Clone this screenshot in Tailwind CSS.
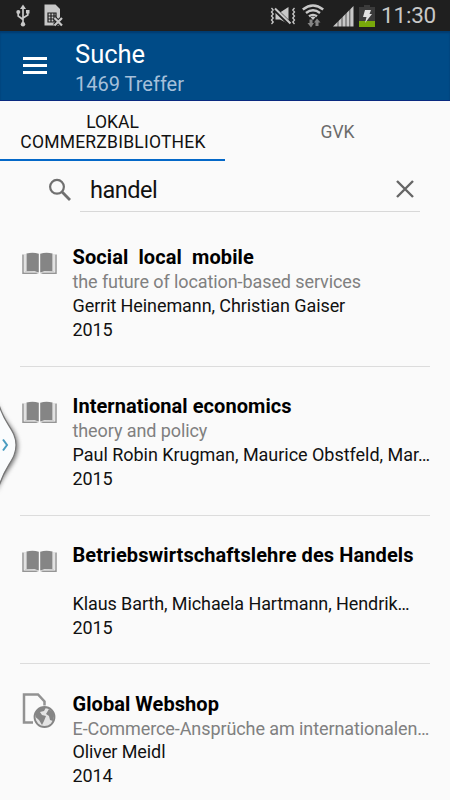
<!DOCTYPE html>
<html lang="de">
<head>
<meta charset="utf-8">
<title>Suche</title>
<script src="https://cdn.jsdelivr.net/npm/@tailwindcss/browser@4"></script>
</head>
<body class="relative w-[450px] h-[800px] overflow-hidden bg-[#fafafa] font-[Roboto,sans-serif] text-[#111]">
<svg class="hidden">
  <symbol id="book" viewBox="0 0 36 24">
    <path d="M4.500 1.500Q11 -.3 16.800 1.800V20.500Q11 18.500 4.500 19.400Z" fill="#858585"/>
    <path d="M18.200 1.800Q24 -.3 30.500 1.500V19.400Q24 18.500 18.200 20.500Z" fill="#858585"/>
    <path d="M1 2.500V21.300H15.500M34 2.500V21.300H19.500" fill="none" stroke="#959595" stroke-width="1.500"/>
    <path d="M3 2V19.800Q10 19 16.500 21.200M32 2V19.800Q25 19 18.500 21.200" fill="none" stroke="#cacaca" stroke-width="1"/>
  </symbol>
</svg>
<header>
  <div class="flex h-[31px] items-center bg-[#1f1f1f] text-[#c8c8c8]">
    <svg class="ml-4 w-[14px] h-[23px]" viewBox="0 0 14 23" fill="none" stroke="#c8c8c8" stroke-width="1.700">
      <path d="M7 4V19M2.200 8V12L7 15.500M11.800 8V11L7 14"/>
      <path d="M7 .5L10 5H4Z" fill="#c8c8c8" stroke="none"/>
      <circle cx="7" cy="20.200" r="2.200" fill="#c8c8c8" stroke="none"/>
      <circle cx="2.300" cy="8" r="2" fill="#c8c8c8" stroke="none"/>
      <path d="M10 6H13.500V9.500H10Z" fill="#c8c8c8" stroke="none"/>
    </svg>
    <svg class="ml-[14px] w-[20px] h-[23px]" viewBox="0 0 20 23">
      <path d="M.5 .5H11.500L16 5V21.500H.5Z" fill="#c8c8c8"/>
      <path d="M4 9H12V18H4ZM4 12H12M4 15H12M7 9V18M10 9V18" fill="none" stroke="#1f1f1f" stroke-width="1.200"/>
      <path d="M10.500 14L18 21.500M18 14L10.500 21.500" stroke="#1f1f1f" stroke-width="4"/>
      <path d="M10.500 14L18 21.500M18 14L10.500 21.500" stroke="#c8c8c8" stroke-width="2.200"/>
    </svg>
    <svg class="ml-auto w-[26px] h-[20px]" viewBox="0 0 26 20" fill="none" stroke="#c8c8c8" stroke-width="1.500">
      <path d="M1.500 2L3.200 4L1.500 6L3.200 8L1.500 10L3.200 12L1.500 14L3.200 16L1.500 18M24.500 2L22.800 4L24.500 6L22.800 8L24.500 10L22.800 12L24.500 14L22.800 16L24.500 18" stroke-width="1.300"/>
      <path d="M5.500 6.500H10L18.500 1V18L10 13.500H5.500Z" fill="#c8c8c8" stroke="none"/>
      <path d="M5 3.500L20.500 18.500" stroke="#1f1f1f" stroke-width="4.500"/>
      <path d="M5 2.500L20.500 17.500" stroke-width="2"/>
    </svg>
    <svg class="ml-[6px] w-[22px] h-[24px]" viewBox="0 0 22 24" fill="none" stroke="#c8c8c8" stroke-width="2.400">
      <path d="M.8 5.500Q11 -2.500 21.200 5.500M4 9Q11 3.500 18 9M7 12.300Q11 9.500 15 12.300"/>
      <path d="M8.500 13.300Q11 11.800 13.500 13.300L11 16Z" fill="#c8c8c8" stroke="none"/>
      <path d="M5.500 19H7.500V15.500H10.500V19H12L9 23.500ZM12 18.500L15 14.500L18.500 18.500H16.500V22H13.500V18.500Z" fill="#858585" stroke="none"/>
    </svg>
    <svg class="ml-[9px] w-[21px] h-[22px]" viewBox="0 0 21 22">
      <path d="M0 21.500L20.500 1V21.500Z" fill="#c8c8c8"/>
      <path d="M5 14V22M9 10V22M13 6V22M16.800 3V22" stroke="#1f1f1f" stroke-width=".7"/>
    </svg>
    <svg class="ml-[5px] w-[16px] h-[22px]" viewBox="0 0 16 22">
      <path d="M5 0H11V2H16V17H0V2H5Z" fill="#3b3b3b"/>
      <path d="M0 16H16V22H0Z" fill="#78a80a"/>
      <path d="M6 5H12L10.500 9H13L6 18L7.500 12H4Z" fill="#e0e0e0"/>
    </svg>
    <span class="ml-[6px] mr-[14px] w-[55px] whitespace-nowrap text-[22.500px] leading-[31px] tracking-[-0.200px]">11:30</span>
  </div>
  <div class="flex h-[70px] border-b border-[#0a2a80] bg-[#004b87] pl-[23px] text-white shadow-[inset_0_2px_2px_#003b70]">
    <div class="mt-[26px] flex h-[17px] w-[24px] flex-col justify-between">
      <span class="h-[3px] bg-white"></span><span class="h-[3px] bg-white"></span><span class="h-[3px] bg-white"></span>
    </div>
    <div class="ml-7 whitespace-nowrap">
      <h1 class="mt-[8px] text-[25.500px] leading-[30px]">Suche</h1>
      <p class="mt-[3px] text-[20px] leading-[24px] text-[#a6c0da]">1469 Treffer</p>
    </div>
  </div>
</header>
<nav class="grid h-[60px] grid-cols-2 text-center text-[17.500px] leading-[20px]">
  <div class="border-b-2 border-[#0468c8] pt-[11px]">LOKAL<br><span class="ml-px tracking-[0.220px]">COMMERZBIBLIOTHEK</span></div>
  <div class="pt-[21px] text-[#6b6b6b]">GVK</div>
</nav>
<div class="ml-[48px] mr-[30px] flex h-[51px]">
  <svg class="ml-px mt-[17px] w-[24px] h-[24px]" viewBox="0 0 24 24" fill="none" stroke="#707070" stroke-width="2.200"><circle cx="8" cy="8.800" r="6.900"/><path d="M12.900 13.700L21 22" stroke-width="2.800"/></svg>
  <div class="ml-[7px] flex flex-1 border-b border-[#d8d8d8] pl-[10px]">
    <span class="pt-[13px] text-[23.500px] leading-[32px] tracking-[-0.500px]">handel</span>
    <svg class="ml-auto mr-[6px] mt-[19px] w-[18px] h-[18px]" viewBox="0 0 18 18" stroke="#666" stroke-width="2.400"><path d="M1 1L17 17M17 1L1 17"/></svg>
  </div>
</div>
<main class="mx-5 whitespace-nowrap text-[18px] leading-[24px] tracking-[-0.090px]">
  <article class="flex h-[155px] border-b border-[#dcdcdc] pt-[33px]">
    <svg class="ml-[2px] mt-[7px] w-[36px] h-[24px] shrink-0"><use href="#book"/></svg>
    <div class="ml-[14.500px]"><h2 class="whitespace-pre text-[20px] font-bold leading-[25px] tracking-[0.090px] text-black">Social  local  mobile</h2><p class="text-[#808080]">the future of location-based services</p><p>Gerrit Heinemann, Christian Gaiser</p><p>2015</p></div>
  </article>
  <article class="flex h-[149px] border-b border-[#dcdcdc] pt-[27px]">
    <svg class="ml-[2px] mt-[7px] w-[36px] h-[24px] shrink-0"><use href="#book"/></svg>
    <div class="ml-[14.500px]"><h2 class="text-[20px] font-bold leading-[25px] tracking-[0.060px] text-black">International economics</h2><p class="text-[#808080]">theory and policy</p><p class="tracking-[-0.030px]">Paul Robin Krugman, Maurice Obstfeld, Mar…</p><p>2015</p></div>
  </article>
  <article class="flex h-[148px] border-b border-[#dcdcdc] pt-[27px]">
    <svg class="ml-[2px] mt-[7px] w-[36px] h-[24px] shrink-0"><use href="#book"/></svg>
    <div class="ml-[14.500px]"><h2 class="text-[20px] font-bold leading-[25px] tracking-[0.090px] text-black">Betriebswirtschaftslehre des Handels</h2><p>&nbsp;</p><p>Klaus Barth, Michaela Hartmann, Hendrik…</p><p>2015</p></div>
  </article>
  <article class="flex h-[137px] pt-[28px]">
    <svg class="ml-[2px] mt-0 w-[36px] h-[38px] shrink-0" viewBox="0 0 36 38" fill="none">
      <path d="M11 30.500H2V2.500H16L22.500 9.500V13.500" stroke="#929292" stroke-width="2.500"/>
      <circle cx="22.500" cy="25" r="10" fill="#e4e4e4" stroke="#858585" stroke-width="1.800"/>
      <path d="M14 20L18 16L24 15.500L22 19L18 20L20 23L24 24L22 29L20 33L17 28L13.500 25ZM27 17L31 20L32 24L31 29L28 28L27 24L24 22Z" fill="#858585"/>
    </svg>
    <div class="ml-[14.500px]"><h2 class="text-[20px] font-bold leading-[25px] tracking-[0.060px] text-black">Global Webshop</h2><p class="text-[#808080] tracking-[-0.090px]">E-Commerce-Ansprüche am internationalen…</p><p class="-mt-px">Oliver Meidl</p><p>2014</p></div>
  </article>
</main>
<svg class="absolute left-0 top-[395px] w-[26px] h-[100px] overflow-visible" viewBox="0 0 26 100" fill="none">
  <path class="blur-[2px]" d="M-3 8C4 28 18 34 18 51S4 76 -3 97Z" fill="#777"/>
  <path d="M-2 6C3 29 16 34 16 50S4 70 -2 95Z" fill="#fafcfd" stroke="#777" stroke-width="1.200"/>
  <path d="M3 44.500L7 50L3 55.500" stroke="#4a9cc0" stroke-width="2"/>
</svg>
</body>
</html>
